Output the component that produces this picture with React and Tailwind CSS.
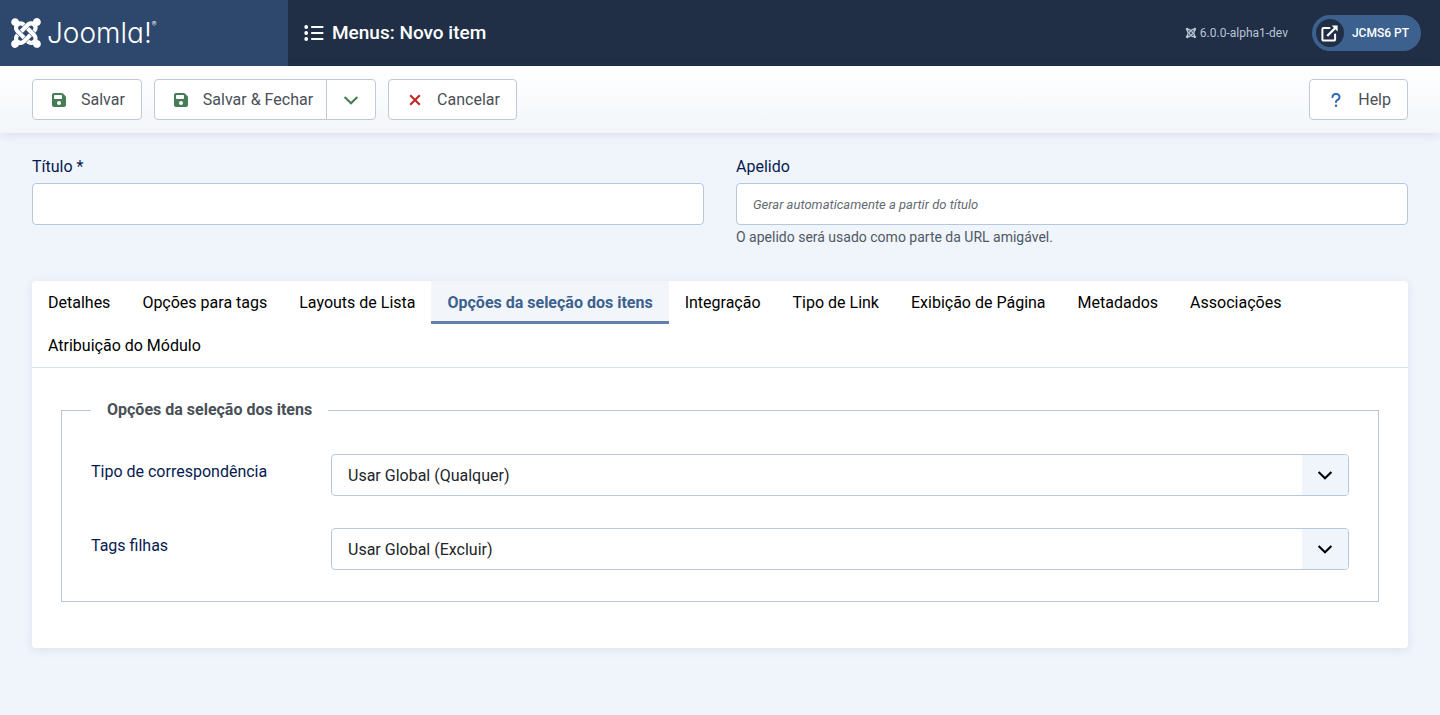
import React, { useState } from "react";
import { FaJoomla, FaFloppyDisk, FaQuestion } from "react-icons/fa6";

const tabs = [
  "Detalhes",
  "Opções para tags",
  "Layouts de Lista",
  "Opções da seleção dos itens",
  "Integração",
  "Tipo de Link",
  "Exibição de Página",
  "Metadados",
  "Associações",
  "Atribuição do Módulo",
];

const buttonBox = "h-[41px] border border-[#c2c9d6] bg-white text-[#495057]";
const iconButton = "flex items-center gap-[14px] rounded pr-4 pl-[18px]";
const fieldBox = "block h-[42px] w-full rounded border border-[#b6c7de] bg-white px-4";

function ListIcon() {
  return (
    <svg viewBox="0 0 20 16" className="h-4 w-5" fill="currentColor" aria-hidden="true">
      <circle cx="2.2" cy="2" r="1.9" />
      <circle cx="2.2" cy="8" r="1.9" />
      <circle cx="2.2" cy="14" r="1.9" />
      <rect x="7" y="1" width="12.5" height="2" rx="0.8" />
      <rect x="7" y="7" width="12.5" height="2" rx="0.8" />
      <rect x="7" y="13" width="12.5" height="2" rx="0.8" />
    </svg>
  );
}

function ExternalIcon() {
  return (
    <svg viewBox="0 0 17 17" className="size-[17px]" fill="none" stroke="currentColor" strokeWidth="2" aria-hidden="true">
      <path d="M8.5 3H2.6A1.2 1.2 0 0 0 1.4 4.2V14.4A1.2 1.2 0 0 0 2.6 15.6H12.9A1.2 1.2 0 0 0 14.1 14.4V9.5" strokeLinecap="round" />
      <path d="M6.2 11L14 3.2" strokeWidth="2.3" />
      <path d="M10.6 0.5H16.6V6.5Z" fill="currentColor" stroke="none" />
    </svg>
  );
}

function ChevronIcon({ className }) {
  return (
    <svg viewBox="0 0 16 16" className={`size-4 ${className}`} fill="none" stroke="currentColor" strokeWidth="2.1" aria-hidden="true">
      <path d="M1.6 5L8 11.2L14.4 5" />
    </svg>
  );
}

function CrossIcon() {
  return (
    <svg viewBox="0 0 16 16" className="size-4 shrink-0 text-[#c52827]" fill="none" stroke="currentColor" strokeWidth="2.2" aria-hidden="true">
      <path d="M3.2 3.2L12.8 12.8M12.8 3.2L3.2 12.8" />
    </svg>
  );
}

function Header() {
  return (
    <header className="flex h-[66px] items-stretch bg-[#202f46] text-white">
      <a href="#" aria-label="Joomla!" className="flex w-72 shrink-0 items-center gap-1 bg-[#2d486c] pl-[9px]">
        <FaJoomla className="size-[34px]" />
        <span className="flex font-['Inter',sans-serif] text-[28px] leading-8 font-light [font-feature-settings:'cv11']">
          Joomla!
          <span className="text-[7px] leading-4">®</span>
        </span>
      </a>
      <div className="flex grow items-center justify-between pr-[19px] pl-4">
        <h1 className="flex items-center gap-2 text-[19px] font-medium">
          <ListIcon />
          Menus: Novo item
        </h1>
        <div className="flex items-center gap-6">
          <span className="flex items-center gap-[3px] text-xs text-[#b9c4d4]">
            <FaJoomla className="size-3" />
            6.0.0-alpha1-dev
          </span>
          <a href="#" className="flex h-9 items-center gap-2 rounded-full bg-[#3d618f] pr-3 pl-1 text-xs font-medium">
            <span className="flex size-7 items-center justify-center rounded-full bg-[#202f46]">
              <ExternalIcon />
            </span>
            JCMS6 PT
          </a>
        </div>
      </div>
    </header>
  );
}

function Toolbar() {
  return (
    <div className="flex h-[67px] items-center gap-3 bg-linear-to-b from-white to-[#f2f6fa] px-8 shadow-[0_2px_10px_rgba(57,76,130,0.12)]">
      <button type="button" className={`${buttonBox} ${iconButton}`}>
        <FaFloppyDisk className="size-4 shrink-0 text-[#457d54]" />
        Salvar
      </button>
      <div className="flex">
        <button type="button" className={`${buttonBox} flex items-center gap-[14px] rounded-l pr-[13px] pl-[18px]`}>
          <FaFloppyDisk className="size-4 shrink-0 text-[#457d54]" />
          Salvar &amp; Fechar
        </button>
        <button
          type="button"
          aria-label="Mais opções"
          className={`${buttonBox} -ml-px flex w-[50px] items-center justify-center rounded-r`}
        >
          <ChevronIcon className="text-[#457d54]" />
        </button>
      </div>
      <button type="button" className={`${buttonBox} ${iconButton}`}>
        <CrossIcon />
        Cancelar
      </button>
      <button type="button" className={`${buttonBox} ${iconButton} ml-auto`}>
        <FaQuestion className="size-4 shrink-0 text-[#2a69b8]" />
        Help
      </button>
    </div>
  );
}

function SelectRow({ id, label, options }) {
  return (
    <div className="flex">
      <label htmlFor={id} className="w-60 shrink-0 pt-1.5 text-[#061a52]">
        {label}
      </label>
      <div className="relative grow">
        <select id={id} className={`${fieldBox} appearance-none pt-0.5 text-[#212529]`}>
          {options.map((option) => (
            <option key={option}>{option}</option>
          ))}
        </select>
        <span className="pointer-events-none absolute inset-y-px right-px flex w-[46px] items-center justify-center rounded-r-[3px] bg-[#f0f4fb] text-black">
          <ChevronIcon className="" />
        </span>
      </div>
    </div>
  );
}

export default function App() {
  const [active, setActive] = useState(3);
  return (
    <div className="min-h-screen bg-[#f0f4fb] font-['Roboto',sans-serif] text-base text-[#212529]">
      <Header />
      <Toolbar />
      <main className="px-8 pt-[22px] pb-8">
        <div className="grid grid-cols-2 gap-8">
          <div>
            <label htmlFor="title" className="mb-1 block text-[#061a52]">
              Título *
            </label>
            <input id="title" type="text" className={fieldBox} />
          </div>
          <div>
            <label htmlFor="alias" className="mb-1 block text-[#061a52]">
              Apelido
            </label>
            <input
              id="alias"
              type="text"
              placeholder="Gerar automaticamente a partir do título"
              className={`${fieldBox} text-[13px] placeholder:text-[#636a72] placeholder:italic`}
            />
            <p className="mt-0.5 text-sm text-[#4f5964]">O apelido será usado como parte da URL amigável.</p>
          </div>
        </div>

        <section className="mt-[34px] rounded bg-white shadow-[0_2px_10px_rgba(57,76,130,0.1)]">
          <div role="tablist" className="flex flex-wrap overflow-hidden rounded-t border-b border-[#dbe1ea]">
            {tabs.map((tab, index) => (
              <button
                key={tab}
                type="button"
                role="tab"
                aria-selected={index === active}
                onClick={() => setActive(index)}
                className={
                  index === active
                    ? "h-[43px] border-b-3 border-[#6480a8] bg-[#f2f6fa] px-4 pt-[3px] font-bold text-[#3d618f]"
                    : "h-[43px] px-4 text-black"
                }
              >
                {tab}
              </button>
            ))}
          </div>
          <div className="px-[29px] pt-[30px] pb-[46px]">
            <fieldset className="border border-[#b6c7de] px-[29px] pb-[31px]">
              <legend className="px-4 font-bold text-[#495057]">Opções da seleção dos itens</legend>
              <div className="flex flex-col gap-8 pt-8">
                <SelectRow
                  id="match-type"
                  label="Tipo de correspondência"
                  options={["Usar Global (Qualquer)", "Todos", "Qualquer"]}
                />
                <SelectRow
                  id="child-tags"
                  label="Tags filhas"
                  options={["Usar Global (Excluir)", "Incluir", "Excluir"]}
                />
              </div>
            </fieldset>
          </div>
        </section>
      </main>
    </div>
  );
}
